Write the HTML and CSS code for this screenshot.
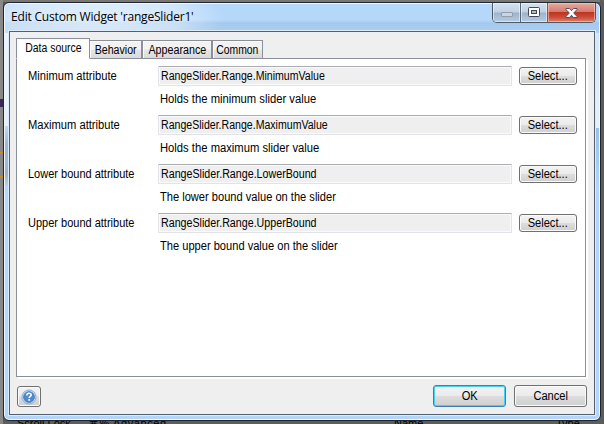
FILE: index.html
```html
<!DOCTYPE html>
<html lang="en">
<head>
<meta charset="utf-8">
<title>Edit Custom Widget</title>
<link rel="stylesheet" href="styles.css">
</head>
<body>
<div class="backdrop" aria-hidden="true">
  <i class="mark m1"></i><i class="mark m2"></i><i class="mark m3"></i>
  <div class="under"><span class="u1">Scroll Lock</span><span class="u2">⌘% Advanced</span><span class="u3">Name</span><span class="u4">Type</span></div>
</div>
<main class="window">
  <header class="titlebar">
    <h1>Edit Custom Widget 'rangeSlider1'</h1>
    <div class="controls">
      <span class="ctl min"><svg width="12" height="5"><rect x=".5" y=".5" width="11" height="4" rx=".5" fill="#c9d5e1" stroke="#929daa"/></svg></span>
      <span class="ctl max"><svg width="12" height="11"><rect x=".5" y=".5" width="11" height="9" rx="1" fill="#fff" stroke="#434759"/><rect x="3.5" y="3.5" width="5" height="3" fill="#a9bed6" stroke="#434759"/></svg></span>
      <span class="ctl close"><svg width="13" height="12"><path d="M1 1.5H4.4L6.5 3.7 8.6 1.5H12V2.6L8.7 6 12 9.4V10.5H8.6L6.5 8.3 4.4 10.5H1V9.4L4.3 6 1 2.6Z" fill="#fff" stroke="#58495c"/></svg></span>
    </div>
  </header>
  <section class="client">
    <nav class="tabs">
      <span class="tab active"><b class="t1">Data source</b></span>
      <span class="tab behavior"><b class="t2">Behavior</b></span>
      <span class="tab appearance"><b class="t3">Appearance</b></span>
      <span class="tab common"><b class="t4">Common</b></span>
    </nav>
    <div class="panel">
      <div class="field"><span class="label l1">Minimum attribute</span><div class="value"><span class="v1">RangeSlider.Range.MinimumValue</span></div><button class="select"><b>Select...</b></button><p class="d1">Holds the minimum slider value</p></div>
      <div class="field"><span class="label l1">Maximum attribute</span><div class="value"><span class="v1">RangeSlider.Range.MaximumValue</span></div><button class="select"><b>Select...</b></button><p class="d1">Holds the maximum slider value</p></div>
      <div class="field"><span class="label l2">Lower bound attribute</span><div class="value"><span class="v2">RangeSlider.Range.LowerBound</span></div><button class="select"><b>Select...</b></button><p class="d2">The lower bound value on the slider</p></div>
      <div class="field"><span class="label l2">Upper bound attribute</span><div class="value"><span class="v2">RangeSlider.Range.UpperBound</span></div><button class="select"><b>Select...</b></button><p class="d2">The upper bound value on the slider</p></div>
    </div>
    <footer class="actions">
      <button class="help" aria-label="Help"><svg width="16" height="16" viewBox="0 0 16 16"><circle cx="8" cy="8" r="7" fill="#e3eefb" stroke="#83a9d5"/><circle cx="8" cy="8" r="5.5" fill="#5089cb" stroke="#4076b6" stroke-width=".7"/><path d="M5.9 6.4C5.9 4.9 6.8 4.2 8 4.2s2.2.8 2.2 1.9C10.2 7.5 8.2 7.4 8.2 9" fill="none" stroke="#fff" stroke-width="1.6"/><rect x="7.3" y="10.1" width="1.8" height="1.7" fill="#fff"/></svg></button>
      <button class="ok"><b>OK</b></button>
      <button class="cancel"><b>Cancel</b></button>
    </footer>
  </section>
</main>
</body>
</html>
```

FILE: styles.css
```css
* { box-sizing: border-box; }
body {
  margin: 0;
  width: 604px;
  height: 424px;
  overflow: hidden;
  position: relative;
  padding: 2px 3px 3px;
  font: 12px/13px "Liberation Sans", Arial, sans-serif;
  color: #000;
}
.backdrop {
  position: absolute;
  inset: 0;
  background: linear-gradient(90deg, #888 0 3px, transparent 3px 600px, #5c5c5c 600px),
    linear-gradient(#777 0 2px, #555 2px 421px, #5f5d5a 421px);
}
.mark { position: absolute; left: 0; width: 3px; height: 2px; background: #c98a21; }
.m1 { top: 152px; }
.m2 { top: 176px; }
.m3 { top: 99px; height: 8px; background: #38265c; }
.under { position: absolute; left: 0; top: 417px; width: 604px; height: 7px; overflow: hidden; font-size: 11px; line-height: 12px; }
.under span { position: absolute; top: 0; white-space: nowrap; }
.u1 { left: 17px; }
.u2 { left: 88px; letter-spacing: .6px; }
.u3 { left: 394px; }
.u4 { left: 556px; }

.window {
  position: relative;
  width: 598px;
  height: 419px;
  padding: 0 5px 5px;
  border: 1px solid #20262c;
  border-radius: 6px;
  box-shadow: inset 0 0 0 1px #eff8ff;
  background:
    linear-gradient(#edf4fb, #e6effa) 0 30px / 6px 93px no-repeat,
    linear-gradient(#bed9f5, #99b9da 30%, #a8b8ba 48%, #9bbbe0 60%, #a8b1ae 80%, #afd2f7) 0 123px / 6px 60px no-repeat,
    linear-gradient(#d3e5f8, #e6f0fa) 100% 30px / 6px 95px no-repeat,
    linear-gradient(#9cbfe4, #b2d5fa) 100% 125px / 6px 60px no-repeat,
    radial-gradient(130px 40px at 90px 15px, rgba(255,255,255,.6), rgba(255,255,255,.4) 65%, transparent) 0 0 / 100% 30px no-repeat,
    linear-gradient(#b5d7fa 0 17px, #a5c9ec 20px, #abcff3 29px, #b2d5f9 30px);
}
.titlebar { height: 28px; display: flex; justify-content: space-between; }
h1 {
  margin: 5px 0 0 2px;
  font: 12px/17px "Open Sans", "Noto Sans", sans-serif;
  letter-spacing: -.19px;
  white-space: nowrap;
}
.controls {
  display: flex;
  width: 104px;
  height: 20px;
  margin-right: -1px;
  border: 1px solid #4c5a68;
  border-top: 0;
  border-radius: 0 0 5px 5px;
  overflow: hidden;
}
.ctl { display: flex; align-items: center; justify-content: center; box-shadow: inset 0 0 0 1px rgba(255,255,255,.5); }
.min, .max { width: 27px; border-right: 1px solid #576675; background: linear-gradient(#d3e2f2, #bfd1e4 48%, #9cb3ca 52%, #b6cce2); }
.min { width: 28px; }
.min svg { margin-top: 4px; }
.close { flex: 1; background: linear-gradient(#e4aca1, #d8796a 46%, #bb3424 50%, #ca4d36 75%, #e18167); box-shadow: inset 0 0 0 1px rgba(255,210,195,.55); }
.close svg { margin-right: 1px; }

.client {
  height: 384px;
  padding: 6px 8px 0 6px;
  border: 1px solid #53616e;
  box-shadow: 0 0 0 1px #dcecfc;
  background: #efefef;
}
.tabs { display: flex; align-items: flex-end; height: 21px; position: relative; }
.tab {
  height: 19px;
  border: 1px solid #8b8e9b;
  background: linear-gradient(#f2f2f2 0 48%, #e6e6e6 52%, #dadada);
  box-shadow: inset 1px 1px #fafafa;
  display: flex;
  justify-content: center;
  line-height: 18px;
}
span, p, b { white-space: nowrap; }
b { font-weight: 400; display: inline-block; }
.active { width: 74px; height: 21px; background: #fff; border-bottom-color: #fff; line-height: 19px; }
.behavior { width: 52px; border-left: 0; }
.appearance { width: 70px; }
.common { width: 51px; }
.t1 { transform: scaleX(.871); }
.t2 { transform: scaleX(.885); }
.t3 { transform: scaleX(.893); }
.t4 { transform: scaleX(.865); }
.panel {
  height: 319px;
  margin-top: -1px;
  padding: 7px 7px 0 11px;
  border: 1px solid #8b8e9b;
  background: #fff;
  box-shadow: 2px 2px #fff;
}
.field {
  display: grid;
  grid-template-columns: 130px 354px 58px;
  grid-template-rows: 20px 29px;
  height: 49px;
}
.label { line-height: 20px; justify-self: start; transform-origin: left; }
.l1 { transform: scaleX(.93); }
.l2 { transform: scaleX(.917); }
.value { border: 1px solid #e2e3ea; border-top-color: #abadb3; padding-left: 2px; box-shadow: inset 0 0 0 1px #fafafa; background: #efefef; line-height: 18px; border-radius: 1px; }
.value span { display: inline-block; transform-origin: left; }
.v1 { transform: scaleX(.881); }
.v2 { transform: scaleX(.89); }
.field p { grid-column: 2; justify-self: start; margin: 7px 0 0 2px; line-height: 13px; transform-origin: left; }
.d1 { transform: scaleX(.937); }
.d2 { transform: scaleX(.925); }
button {
  padding: 0;
  color: #000;
  font: 12px/14px "Liberation Sans", Arial, sans-serif;
  border: 1px solid #707070;
  border-radius: 3px;
  background: linear-gradient(#f3f3f3 0, #ebebeb 49%, #dddddd 51%, #cfcfcf);
  box-shadow: inset 0 0 0 1px #fafafa;
}
button b { transform: scaleX(.925); }
.select { width: 58px; height: 18px; margin: 1px 0 0 7px; justify-self: start; }
.actions { display: flex; padding: 8px 0 0 1px; align-items: flex-start; }
.help { width: 24px; height: 21px; margin-top: 1px; display: flex; align-items: center; justify-content: center; }
.ok, .cancel { width: 73px; height: 22px; }
.ok { margin-left: auto; border-color: #3c7fb1; box-shadow: inset 0 0 0 1px #48d1f5; }
.cancel { margin-left: 8px; margin-right: -1px; }
```
